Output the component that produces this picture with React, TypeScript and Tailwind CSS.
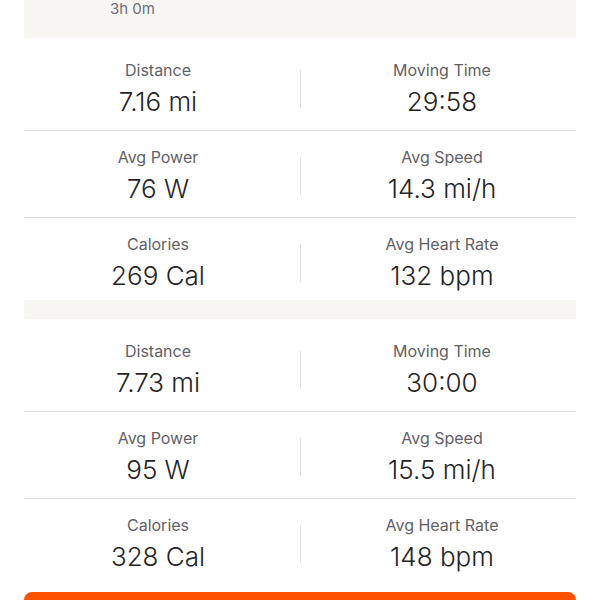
const sections = [
  [
    [
      { label: "Distance", value: "7.16 mi" },
      { label: "Moving Time", value: "29:58" },
    ],
    [
      { label: "Avg Power", value: "76 W" },
      { label: "Avg Speed", value: "14.3 mi/h" },
    ],
    [
      { label: "Calories", value: "269 Cal" },
      { label: "Avg Heart Rate", value: "132 bpm" },
    ],
  ],
  [
    [
      { label: "Distance", value: "7.73 mi" },
      { label: "Moving Time", value: "30:00" },
    ],
    [
      { label: "Avg Power", value: "95 W" },
      { label: "Avg Speed", value: "15.5 mi/h" },
    ],
    [
      { label: "Calories", value: "328 Cal" },
      { label: "Avg Heart Rate", value: "148 bpm" },
    ],
  ],
];

function Stat({ label, value }: { label: string; value: string }) {
  return (
    <div className="flex flex-col items-center">
      <div className="text-[16px] leading-[20px] text-[#5f5f66]">{label}</div>
      <div className="mt-[6px] text-[26px] font-light leading-[32px] text-[#242428]">{value}</div>
    </div>
  );
}

export default function App() {
  return (
    <div
      className="h-[600px] w-[600px] overflow-hidden bg-white"
      style={{ fontFamily: "Inter, 'Noto Sans', sans-serif" }}
    >
      <div className="mx-[24px]">
        <div className="h-[38px] bg-[#f7f6f3] pl-[86px]">
          <div className="text-[15px] leading-[18px] text-[#6d6d78]">3h 0m</div>
        </div>

        {sections.map((rows, si) => (
          <div key={si}>
            {si > 0 && <div className="h-[19px] bg-[#f7f6f3]" />}
            <div className="pt-[6px]">
              {rows.map((pair, ri) => (
                <div
                  key={ri}
                  className={
                    ri < rows.length - 1
                      ? "grid h-[87px] grid-cols-[1fr_16px_1fr] items-start border-b border-[#dfdfe2] pt-[16px]"
                      : "grid h-[82px] grid-cols-[1fr_16px_1fr] items-start pt-[16px]"
                  }
                >
                  <Stat {...pair[0]} />
                  <div className="mt-[10px] flex justify-center">
                    <div className="h-[38px] w-px bg-[#e3e3e6]" />
                  </div>
                  <Stat {...pair[1]} />
                </div>
              ))}
            </div>
          </div>
        ))}

        <div className="mt-[11px] h-[20px] rounded-t-[8px] bg-[#fc5200]" />
      </div>
    </div>
  );
}
